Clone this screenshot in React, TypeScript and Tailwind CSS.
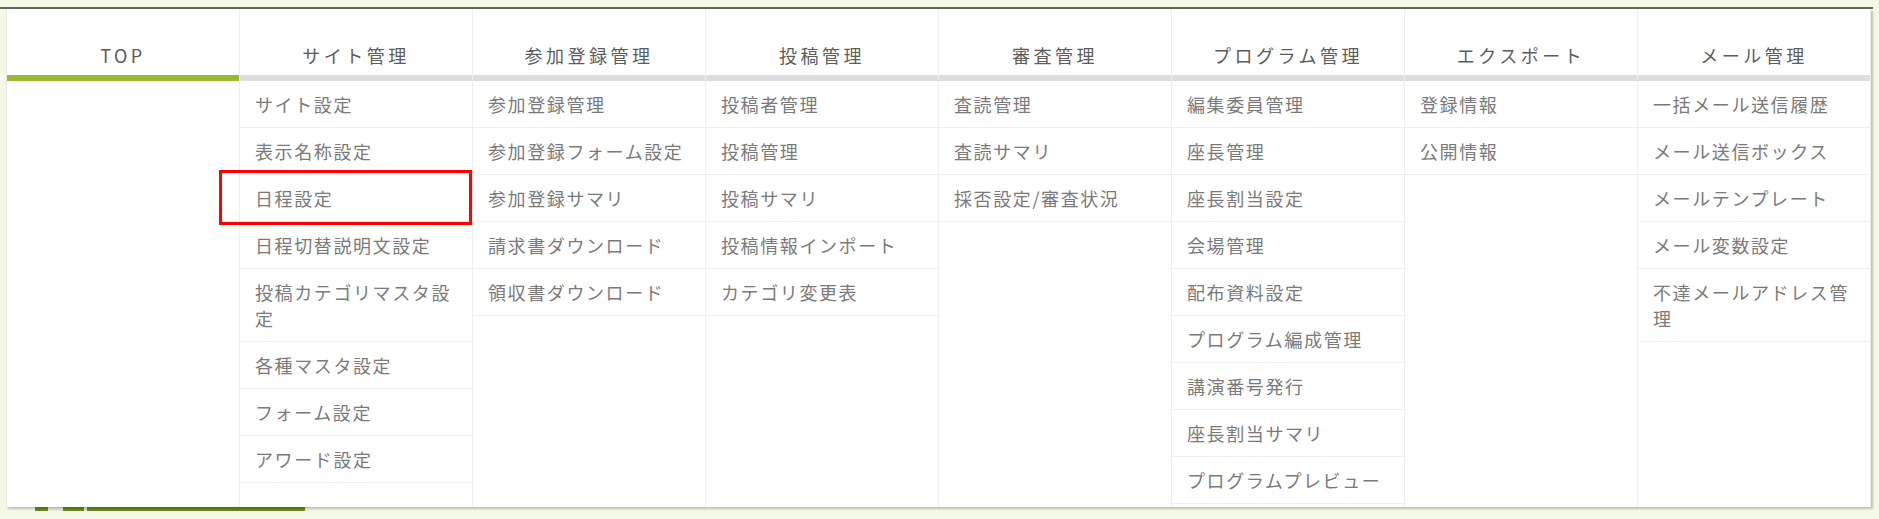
import React from "react";

type Col = { title: string; active?: boolean; items: string[] };

const cols: Col[] = [
  { title: "TOP", active: true, items: [] },
  {
    title: "サイト管理",
    items: [
      "サイト設定",
      "表示名称設定",
      "日程設定",
      "日程切替説明文設定",
      "投稿カテゴリマスタ設定",
      "各種マスタ設定",
      "フォーム設定",
      "アワード設定",
    ],
  },
  {
    title: "参加登録管理",
    items: ["参加登録管理", "参加登録フォーム設定", "参加登録サマリ", "請求書ダウンロード", "領収書ダウンロード"],
  },
  {
    title: "投稿管理",
    items: ["投稿者管理", "投稿管理", "投稿サマリ", "投稿情報インポート", "カテゴリ変更表"],
  },
  { title: "審査管理", items: ["査読管理", "査読サマリ", "採否設定/審査状況"] },
  {
    title: "プログラム管理",
    items: [
      "編集委員管理",
      "座長管理",
      "座長割当設定",
      "会場管理",
      "配布資料設定",
      "プログラム編成管理",
      "講演番号発行",
      "座長割当サマリ",
      "プログラムプレビュー",
    ],
  },
  { title: "エクスポート", items: ["登録情報", "公開情報"] },
  {
    title: "メール管理",
    items: ["一括メール送信履歴", "メール送信ボックス", "メールテンプレート", "メール変数設定", "不達メールアドレス管理"],
  },
];

export default function App() {
  return (
    <div
      className="relative w-full h-[519px] overflow-hidden bg-[#f4f8e7]"
      style={{ fontFamily: '"Noto Sans CJK JP", "Noto Sans", sans-serif' }}
    >
      {/* underlying olive bar peeking below the panel */}
      <div className="absolute left-[35px] top-[505px] w-[270px] h-[6px] bg-[#6b8a1e]" />
      <div className="absolute left-[48px] top-[505px] w-[15px] h-[6px] bg-[#e8ecdc]" />
      <div className="absolute left-[84px] top-[505px] w-[3px] h-[6px] bg-[#dfe6cf]" />

      <div className="h-[7px]" />
      <div className="h-[2px] w-[1873px] bg-[#5f6b52]" />

      <div className="relative ml-[6px] w-[1865px] h-[498px] bg-white border-l border-[#e6e6e6] shadow-[2px_2px_2px_rgba(0,0,0,0.22)] flex">
        {cols.map((c, i) => (
          <div key={i} className="flex-1 min-w-0 flex flex-col border-r border-[#efefef]">
            <div className="h-[66px] pt-[33px] text-center text-[18px] leading-[26px] tracking-[3.5px] text-[#5c5c5c]">
              {c.title}
            </div>
            <div className={c.active ? "h-[6px] bg-[#9aba2b]" : "h-[6px] bg-[#dddddd]"} />
            <div className="flex flex-col">
              {c.items.map((it, j) => (
                <div
                  key={j}
                  className="px-[15px] py-[10px] border-b border-[#efefef] text-[18px] leading-[26px] tracking-[1.6px] text-[#7a7a7a]"
                >
                  {it}
                </div>
              ))}
            </div>
          </div>
        ))}
      </div>

      {/* red highlight overlay */}
      <div className="absolute left-[219px] top-[170px] w-[253px] h-[55px] border-[3px] border-[#ff0000]" />
    </div>
  );
}
